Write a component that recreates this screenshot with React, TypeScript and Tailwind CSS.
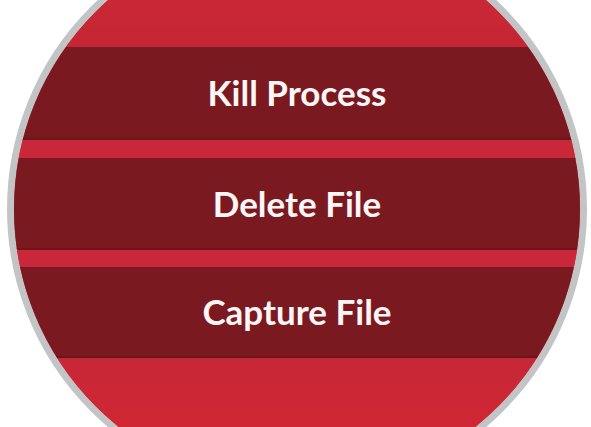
import React from "react";

const actions = [
  { label: "Kill Process", band: "h-[93px]", gap: "" },
  { label: "Delete File", band: "h-[92px]", gap: "h-[18px]" },
  { label: "Capture File", band: "h-[91px]", gap: "h-[17px]" },
];

const App: React.FC = () => {
  return (
    <div className="w-[591px] h-[427px] overflow-hidden bg-white">
      <div className="ml-[7px] -mt-[77px] w-[580px] h-[572px] rounded-full border-[7px] border-[#c3c4c5] overflow-hidden bg-[#cc2836] flex flex-col">
        <div className="h-[117px] shrink-0 bg-gradient-to-b from-[#d12a38] to-[#c52634]" />
        {actions.map((a) => (
          <React.Fragment key={a.label}>
            {a.gap && <div className={`${a.gap} shrink-0 bg-[#c8283a]`} />}
            <div
              className={`${a.band} shrink-0 bg-[#7a1a20] border-b-2 border-[#6e151b] flex items-center justify-center`}
            >
              <span className="text-[35px] font-bold text-[#fdf6f6] font-['Lato',sans-serif] leading-none">
                {a.label}
              </span>
            </div>
          </React.Fragment>
        ))}
        <div className="flex-1 bg-gradient-to-b from-[#c72737] to-[#d9262f]" />
      </div>
    </div>
  );
};

export default App;
